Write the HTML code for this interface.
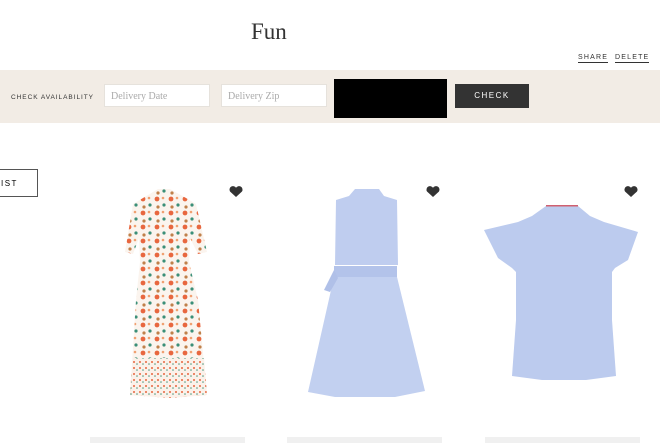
<!DOCTYPE html>
<html><head><style>
body{margin:0;width:660px;height:442px;overflow:hidden;background:#fff;font-family:"Liberation Sans",sans-serif;position:relative}
.a{position:absolute}
.t{font-size:7px;letter-spacing:1.2px;color:#333}
.inp{background:#fff;border:1px solid #e6e2dc;height:23px;box-sizing:border-box;font-family:"Liberation Serif",serif;font-size:10px;color:#aaa;padding:6px 6px}
.bar{background:#f0f0f0;height:6px;top:437px}
</style></head><body>
<div class="a" style="left:251px;top:19px;font-family:'Liberation Serif',serif;font-size:23px;color:#333">Fun</div>
<div class="a t" style="left:578px;top:54px;border-bottom:1px solid #333;padding-bottom:1px">SHARE</div>
<div class="a t" style="left:615px;top:54px;border-bottom:1px solid #333;padding-bottom:1px">DELETE</div>
<div class="a" style="left:0;top:70px;width:660px;height:53px;background:#f2ece5"></div>
<div class="a t" style="left:11px;top:94px;letter-spacing:0.95px;font-size:6.5px">CHECK AVAILABILITY</div>
<div class="a inp" style="left:104px;top:84px;width:106px">Delivery Date</div>
<div class="a inp" style="left:221px;top:84px;width:106px">Delivery Zip</div>
<div class="a" style="left:334px;top:79px;width:113px;height:39px;background:#000"></div>
<div class="a" style="left:455px;top:84px;width:74px;height:24px;background:#333;color:#fff;font-size:8px;letter-spacing:1.5px;text-align:center;line-height:24px">CHECK</div>
<div class="a" style="left:-10px;top:169px;width:48px;height:28px;border:1px solid #555;font-size:8px;letter-spacing:1.5px;line-height:28px;padding-left:10px;box-sizing:border-box">IST</div>
<svg class="a" style="left:0;top:0" width="660" height="442">
<defs>
<pattern id="fl" width="14" height="14" patternUnits="userSpaceOnUse">
<rect width="14" height="14" fill="#fbf4ee"/><circle cx="3" cy="3" r="2.4" fill="#e8673f"/><circle cx="10" cy="9" r="1.6" fill="#3b8f78"/><circle cx="9" cy="2" r="1.3" fill="#f0a070"/><circle cx="4" cy="11" r="1.6" fill="#c0804a"/>
</pattern>
<pattern id="fl2" width="6" height="6" patternUnits="userSpaceOnUse"><rect width="6" height="6" fill="#fbf1ea"/><circle cx="2" cy="2" r="1" fill="#e8673f"/><circle cx="5" cy="4" r="0.8" fill="#4c9a80"/></pattern>
</defs>
<g fill="#333">
<path d="M236 197l-6-5.5a3.3 3.3 0 0 1 6-3.7a3.3 3.3 0 0 1 6 3.7z"/>
<path d="M433 197l-6-5.5a3.3 3.3 0 0 1 6-3.7a3.3 3.3 0 0 1 6 3.7z"/>
<path d="M631 197l-6-5.5a3.3 3.3 0 0 1 6-3.7a3.3 3.3 0 0 1 6 3.7z"/>
</g>
<path d="M158 189L170 189L186 198L196 204L207 252L198 254L190 238L189 262L198 300L207 395L170 398L130 395L136 300L140 262L139 238L133 254L125 252L133 204L143 198Z" fill="url(#fl)"/>
<path d="M133 358L204 358L207 395L170 398L130 395Z" fill="url(#fl2)"/>
<path d="M355 189l24 0l5 7l13 4l1 65l-63 0l1-65l13-4z" fill="#bfcdef"/>
<path d="M334 266l63 0l0 11l-63 0z" fill="#b3c3ea"/>
<path d="M334 277l63 0l28 114l-30 6h-60l-27-5z" fill="#c2d0f0"/>
<path d="M334 270l-10 20l6 2l8-14z" fill="#b0c0e8"/>
<path d="M546 206L578 206L590 216L604 222L638 232L628 260L615 268L612 272L612 320L616 376L586 380L542 380L512 376L516 320L516 272L512 268L498 258L484 230L518 222L532 216Z" fill="#bccbee"/>
<rect x="546" y="205" width="32" height="1.5" fill="#d06070"/>
</svg>
<div class="a bar" style="left:90px;width:155px"></div>
<div class="a bar" style="left:287px;width:155px"></div>
<div class="a bar" style="left:485px;width:155px"></div>
</body></html>
